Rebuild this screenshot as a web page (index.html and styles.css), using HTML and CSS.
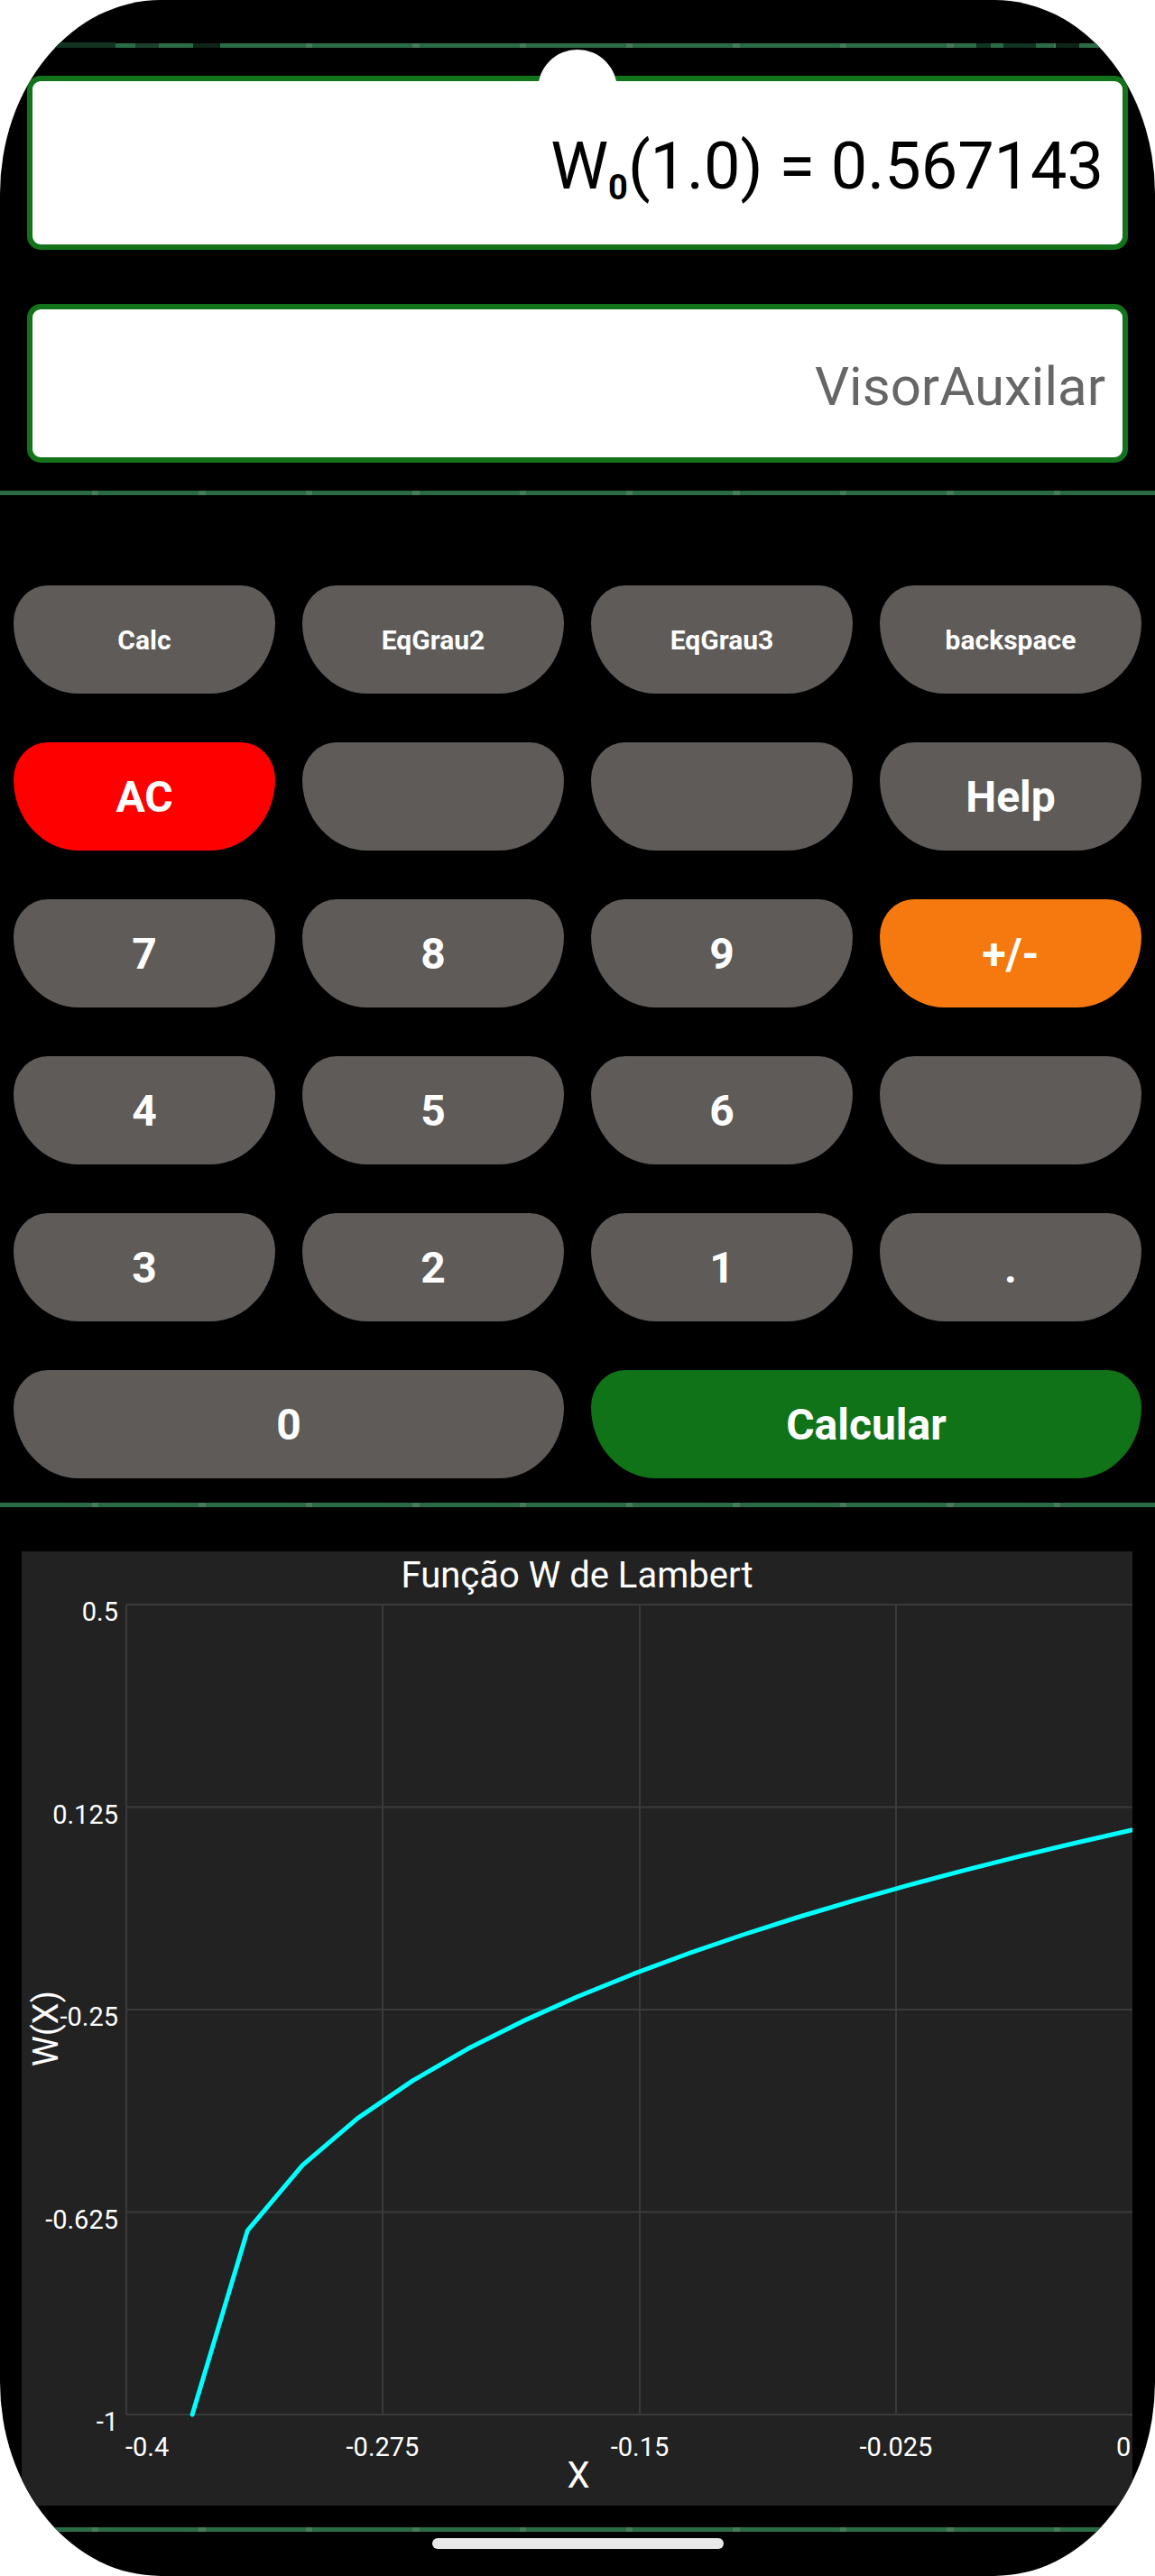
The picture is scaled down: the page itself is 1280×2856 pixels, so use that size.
FILE: index.html
```html
<!DOCTYPE html>
<html lang="pt">
<head>
<meta charset="utf-8">
<title>Função W de Lambert</title>
<link rel="stylesheet" href="styles.css">
</head>
<body>
<div class="phone">
  <div class="gline top-line">
    <span class="sb sb-a"></span>
    <span class="sb sb-b"></span>
    <span class="sb sb-c"></span>
    <span class="sb sb-d"></span>
    <span class="sb sb-e"></span>
    <span class="sb sb-f"></span>
  </div>

  <section class="displays">
    <div class="visor visor-main"><span class="result">W<span class="sub">0</span>(1.0) = 0.567143</span></div>
    <div class="visor visor-aux"><span>VisorAuxilar</span></div>
  </section>

  <div class="gline"></div>

  <section class="keypad">
    <div class="key small">Calc</div>
    <div class="key small">EqGrau2</div>
    <div class="key small">EqGrau3</div>
    <div class="key small">backspace</div>

    <div class="key red">AC</div>
    <div class="key"></div>
    <div class="key"></div>
    <div class="key">Help</div>

    <div class="key">7</div>
    <div class="key">8</div>
    <div class="key">9</div>
    <div class="key orange">+/-</div>

    <div class="key">4</div>
    <div class="key">5</div>
    <div class="key">6</div>
    <div class="key"></div>

    <div class="key">3</div>
    <div class="key">2</div>
    <div class="key">1</div>
    <div class="key">.</div>

    <div class="key wide">0</div>
    <div class="key wide green">Calcular</div>
  </section>

  <div class="gline"></div>

  <section class="chart">
    <svg width="1231" height="1058" viewBox="0 0 1231 1058">
      <g class="grid">
        <line x1="116" y1="59" x2="1231" y2="59"/>
        <line x1="116" y1="283.5" x2="1231" y2="283.5"/>
        <line x1="116" y1="508" x2="1231" y2="508"/>
        <line x1="116" y1="732.5" x2="1231" y2="732.5"/>
        <line x1="116" y1="957" x2="1231" y2="957"/>
        <line x1="116" y1="59" x2="116" y2="957"/>
        <line x1="400" y1="59" x2="400" y2="957"/>
        <line x1="685" y1="59" x2="685" y2="957"/>
        <line x1="969" y1="59" x2="969" y2="957"/>
      </g>
      <polyline class="curve" points="189.1,957 250.2,753.2 311.2,680.6 372.2,628.6 433.3,586.9 494.3,551.6 555.4,520.9 616.4,493.5 677.5,468.7 738.5,446 799.6,425 860.6,405.5 921.6,387.3 982.7,370.1 1043.7,353.8 1104.8,338.4 1165.8,323.7 1226.9,309.7 1287.9,296.3"/>
      <g class="ylab">
        <text x="107" y="77">0.5</text>
        <text x="107" y="301.5">0.125</text>
        <text x="107" y="526">-0.25</text>
        <text x="107" y="750.5">-0.625</text>
        <text x="107" y="975">-1</text>
      </g>
      <g class="xlab">
        <text x="115" y="1003" class="start">-0.4</text>
        <text x="400" y="1003">-0.275</text>
        <text x="685" y="1003">-0.15</text>
        <text x="969" y="1003">-0.025</text>
        <text x="1213" y="1003" class="start">0.1</text>
      </g>
      <text class="title" x="615.5" y="40">Função W de Lambert</text>
      <text class="axis-title" x="617" y="1038">X</text>
      <text class="axis-title y-title" x="40" y="529" transform="rotate(-90 40 529)">W(X)</text>
    </svg>
  </section>

  <div class="gline"></div>
  <div class="home"></div>

  <div class="notch"></div>
</div>
</body>
</html>
```

FILE: styles.css
```css
* {
  box-sizing: border-box;
}

html,
body {
  margin: 0;
  padding: 0;
  background: #ffffff;
}

body {
  font-family: Roboto, "Liberation Sans", Arial, sans-serif;
}

.phone {
  position: relative;
  width: 1280px;
  height: 2856px;
  background: #000000;
  border-radius: 178px / 215px;
  overflow: hidden;
  padding-top: 48px;
}

.gline {
  position: relative;
  height: 5px;
  background: repeating-linear-gradient(90deg, #2a6a45 0, #2a6a45 111px, #477a5b 111px, #477a5b 118.4px);
  background-position: -9px 0;
}

/* faint status bar fragments over the top line */
.sb {
  position: absolute;
  bottom: 0;
  background: #123222;
}

.sb-a { left: 52px; width: 76px; height: 6px; }
.sb-b { left: 150px; width: 26px; height: 5px; background: #1d3f2c; }
.sb-c { left: 214px; width: 30px; height: 5px; background: #0e2418; }
.sb-d { left: 1082px; width: 16px; height: 5px; }
.sb-e { left: 1112px; width: 36px; height: 5px; }
.sb-f { left: 1170px; width: 26px; height: 5px; background: #0e2418; }

.displays {
  display: flex;
  flex-direction: column;
  gap: 60px;
  padding: 31px 30px;
}

.visor {
  display: flex;
  align-items: center;
  justify-content: flex-end;
  background: #ffffff;
  border: 6px solid #12731a;
  border-radius: 15px;
  white-space: nowrap;
}

.visor-main {
  height: 193px;
  padding: 10px 21px 0 0;
  font-size: 72px;
  color: #000000;
}

.visor-main .sub {
  font-size: 38px;
  font-weight: 700;
  vertical-align: -12px;
}

.visor-aux {
  height: 176px;
  padding: 7px 19px 0 0;
  font-size: 60px;
  color: #666666;
}

.keypad {
  display: grid;
  grid-template-columns: repeat(4, 290px);
  grid-auto-rows: 120px;
  column-gap: 30px;
  row-gap: 54px;
  padding: 100px 15px 27px;
}

.key {
  display: flex;
  align-items: center;
  justify-content: center;
  background: #5e5b58;
  color: #ffffff;
  font-size: 48px;
  font-weight: 700;
  border-radius: 38px 38px 72px 72px / 41px 41px 79px 79px;
}

.key.small {
  font-size: 30px;
}

.key.wide {
  grid-column: span 2;
}

.key.red {
  background: #ff0000;
}

.key.orange {
  background: #f5790f;
}

.key.green {
  background: #107317;
}

.chart {
  width: 1231px;
  height: 1058px;
  margin: 49px 0 24px 24px;
  background: #222222;
}

.chart svg {
  display: block;
}

.chart .grid line {
  stroke: #3a3a3a;
  stroke-width: 2;
}

.chart .curve {
  fill: none;
  stroke: #00ffff;
  stroke-width: 5;
  stroke-linejoin: round;
  stroke-linecap: round;
}

.chart text {
  font-family: Roboto, "Liberation Sans", Arial, sans-serif;
  fill: #ffffff;
}

.chart .ylab text {
  font-size: 29px;
  text-anchor: end;
}

.chart .xlab text {
  font-size: 29px;
  text-anchor: middle;
}

.chart .xlab text.start {
  text-anchor: start;
}

.chart .title {
  font-size: 40px;
  text-anchor: middle;
}

.chart .axis-title {
  font-size: 40px;
  text-anchor: middle;
}

.chart .y-title {
  font-size: 38px;
}

.home {
  width: 323px;
  height: 12px;
  margin: 7px auto 0;
  background: #e8e8e8;
  border-radius: 6px;
}

.notch {
  position: absolute;
  left: 596px;
  top: 55px;
  width: 88px;
  height: 88px;
  border-radius: 50%;
  background: #ffffff;
}
```
